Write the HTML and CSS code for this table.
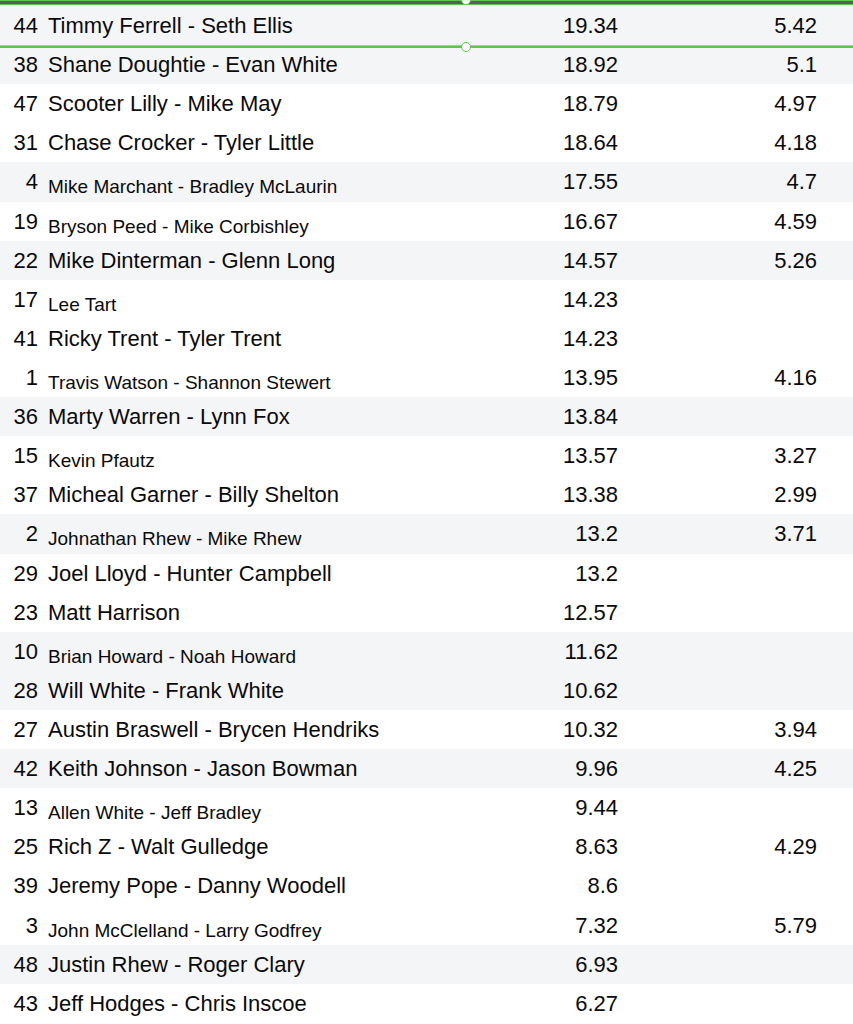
FILE: index.html
```html
<!DOCTYPE html>
<html>
<head>
<meta charset="utf-8">
<link rel="stylesheet" href="styles.css">
</head>
<body>
<div class="table">
  <div class="topbar"></div>
  <div class="handle handle-top"></div>
  <div class="selline"></div>
  <div class="handle handle-mid"></div>

  <div class="row shade"><div class="name"><span class="n">44</span><span class="nm">Timmy Ferrell - Seth Ellis</span></div><div class="v">19.34</div><div class="v">5.42</div></div>
  <div class="row shade"><div class="name"><span class="n">38</span><span class="nm">Shane Doughtie - Evan White</span></div><div class="v">18.92</div><div class="v">5.1</div></div>
  <div class="row"><div class="name"><span class="n">47</span><span class="nm">Scooter Lilly - Mike May</span></div><div class="v">18.79</div><div class="v">4.97</div></div>
  <div class="row"><div class="name"><span class="n">31</span><span class="nm">Chase Crocker - Tyler Little</span></div><div class="v">18.64</div><div class="v">4.18</div></div>
  <div class="row shade"><div class="name"><span class="n">4</span><span class="nm s">Mike Marchant - Bradley McLaurin</span></div><div class="v">17.55</div><div class="v">4.7</div></div>
  <div class="row"><div class="name"><span class="n">19</span><span class="nm s">Bryson Peed - Mike Corbishley</span></div><div class="v">16.67</div><div class="v">4.59</div></div>
  <div class="row shade"><div class="name"><span class="n">22</span><span class="nm">Mike Dinterman - Glenn Long</span></div><div class="v">14.57</div><div class="v">5.26</div></div>
  <div class="row"><div class="name"><span class="n">17</span><span class="nm s">Lee Tart</span></div><div class="v">14.23</div><div class="v"></div></div>
  <div class="row"><div class="name"><span class="n">41</span><span class="nm">Ricky Trent - Tyler Trent</span></div><div class="v">14.23</div><div class="v"></div></div>
  <div class="row"><div class="name"><span class="n">1</span><span class="nm s">Travis Watson - Shannon Stewert</span></div><div class="v">13.95</div><div class="v">4.16</div></div>
  <div class="row shade"><div class="name"><span class="n">36</span><span class="nm">Marty Warren - Lynn Fox</span></div><div class="v">13.84</div><div class="v"></div></div>
  <div class="row"><div class="name"><span class="n">15</span><span class="nm s">Kevin Pfautz</span></div><div class="v">13.57</div><div class="v">3.27</div></div>
  <div class="row"><div class="name"><span class="n">37</span><span class="nm">Micheal Garner - Billy Shelton</span></div><div class="v">13.38</div><div class="v">2.99</div></div>
  <div class="row shade"><div class="name"><span class="n">2</span><span class="nm s">Johnathan Rhew - Mike Rhew</span></div><div class="v">13.2</div><div class="v">3.71</div></div>
  <div class="row"><div class="name"><span class="n">29</span><span class="nm">Joel Lloyd - Hunter Campbell</span></div><div class="v">13.2</div><div class="v"></div></div>
  <div class="row"><div class="name"><span class="n">23</span><span class="nm">Matt Harrison</span></div><div class="v">12.57</div><div class="v"></div></div>
  <div class="row shade"><div class="name"><span class="n">10</span><span class="nm s">Brian Howard - Noah Howard</span></div><div class="v">11.62</div><div class="v"></div></div>
  <div class="row shade"><div class="name"><span class="n">28</span><span class="nm">Will White - Frank White</span></div><div class="v">10.62</div><div class="v"></div></div>
  <div class="row"><div class="name"><span class="n">27</span><span class="nm">Austin Braswell - Brycen Hendriks</span></div><div class="v">10.32</div><div class="v">3.94</div></div>
  <div class="row shade"><div class="name"><span class="n">42</span><span class="nm">Keith Johnson - Jason Bowman</span></div><div class="v">9.96</div><div class="v">4.25</div></div>
  <div class="row"><div class="name"><span class="n">13</span><span class="nm s">Allen White - Jeff Bradley</span></div><div class="v">9.44</div><div class="v"></div></div>
  <div class="row"><div class="name"><span class="n">25</span><span class="nm">Rich Z - Walt Gulledge</span></div><div class="v">8.63</div><div class="v">4.29</div></div>
  <div class="row"><div class="name"><span class="n">39</span><span class="nm">Jeremy Pope - Danny Woodell</span></div><div class="v">8.6</div><div class="v"></div></div>
  <div class="row"><div class="name"><span class="n">3</span><span class="nm s">John McClelland - Larry Godfrey</span></div><div class="v">7.32</div><div class="v">5.79</div></div>
  <div class="row shade"><div class="name"><span class="n">48</span><span class="nm">Justin Rhew - Roger Clary</span></div><div class="v">6.93</div><div class="v"></div></div>
  <div class="row"><div class="name"><span class="n">43</span><span class="nm">Jeff Hodges - Chris Inscoe</span></div><div class="v">6.27</div><div class="v"></div></div>
</div>
</body>
</html>
```

FILE: styles.css
```css
html, body {
  margin: 0;
  padding: 0;
  background: #ffffff;
}

.table {
  position: relative;
  width: 853px;
  font-family: "Liberation Sans", Arial, sans-serif;
  color: #0a0a0a;
}

.topbar {
  height: 6px;
  background: linear-gradient(to bottom,
    #62c251 0px, #62c251 1px,
    #5c5c5c 1px, #5c5c5c 4px,
    #62c251 4px, #62c251 5px,
    #f4f5f7 5px);
}

.row {
  display: grid;
  grid-template-columns: 1fr 118px 199px;
  padding-right: 36px;
  height: 39.12px;
  line-height: 39px;
  box-sizing: border-box;
  background: #ffffff;
}

.row.shade {
  background: #f4f5f7;
}

.name {
  font-size: 22px;
  white-space: nowrap;
}

.n {
  display: inline-block;
  width: 38px;
  text-align: right;
  margin-right: 10px;
  font-size: 22px;
}

.nm.s {
  font-size: 19px;
  line-height: 1;
  vertical-align: -4px;
}

.v {
  font-size: 22px;
  text-align: right;
}

.selline {
  position: absolute;
  left: 0;
  right: 0;
  top: 45px;
  height: 3px;
  background: linear-gradient(to bottom, #bdbdbd 0px, #bdbdbd 1px, #63c152 1px, #63c152 3px);
  z-index: 2;
}

.handle {
  position: absolute;
  width: 8px;
  height: 8px;
  border: 1.5px solid #63c152;
  border-radius: 50%;
  background: #ffffff;
  z-index: 3;
}

.handle-top {
  left: 461px;
  top: -5px;
}

.handle-mid {
  left: 461px;
  top: 41.5px;
}
```
